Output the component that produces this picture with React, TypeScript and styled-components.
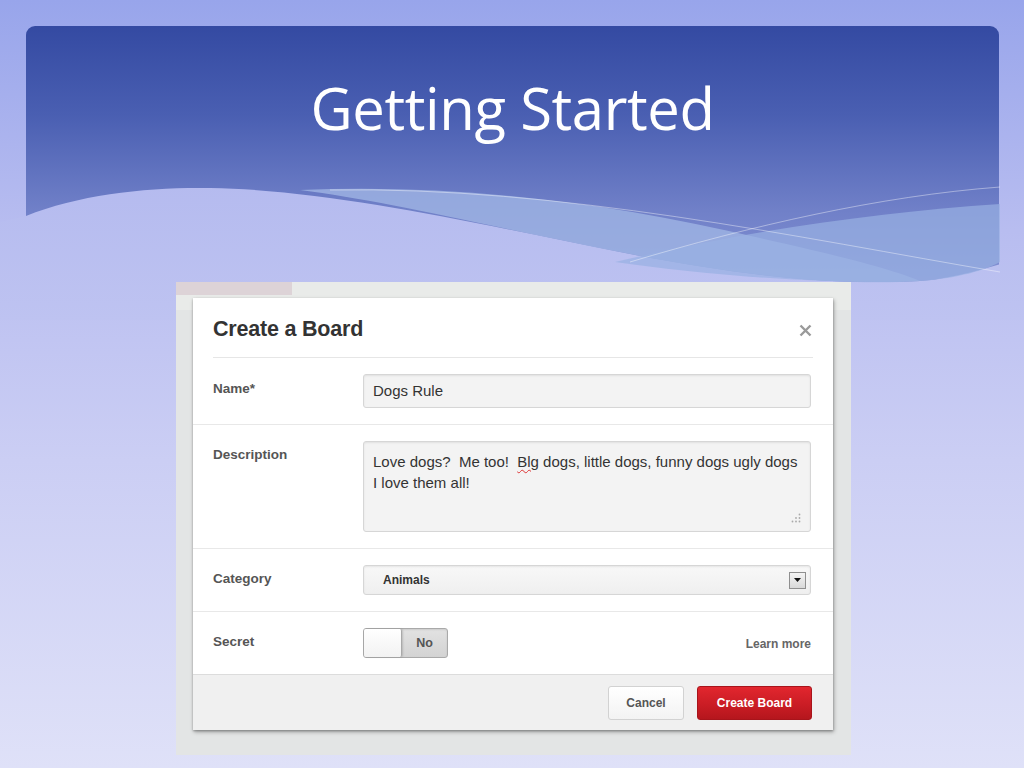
import React from "react";
import styled, { createGlobalStyle } from "styled-components";

const Global = createGlobalStyle`
  html, body { margin: 0; padding: 0; }
  body { width: 1024px; height: 768px; overflow: hidden; font-family: "Liberation Sans", Arial, sans-serif; }
`;

const Slide = styled.div`
  width: 1024px;
  height: 768px;
  box-sizing: border-box;
  padding-top: 26px;
  background: linear-gradient(180deg, #98a5eb 0%, #b8bdf0 30%, #cbcef4 60%, #dfe1f8 100%);
  display: flex;
  flex-direction: column;
`;

const Header = styled.div`
  position: relative;
  margin: 0 25px 0 26px;
  height: 256px;
  border-radius: 9px 9px 0 0;
  background: linear-gradient(180deg, #344aa2 0%, #4a5fb2 35%, #7080c8 72%, #8392d4 100%);
  display: flex;
  justify-content: center;
`;

const Title = styled.h1`
  margin: 42px 0 0 0;
  font-family: "Open Sans", "Noto Sans", sans-serif;
  font-weight: 400;
  font-size: 58px;
  line-height: 80px;
  letter-spacing: -0.4px;
  color: #ffffff;
  position: relative;
  z-index: 1;
`;

const WaveSvg = styled.svg`
  position: absolute;
  left: -26px;
  top: 144px;
  width: 1024px;
  height: 150px;
  overflow: visible;
`;

const Frame = styled.div`
  margin-left: 176px;
  width: 675px;
  height: 473px;
  box-sizing: border-box;
  padding: 16px 18px 25px 17px;
  background:
    linear-gradient(#ddd3d7, #ddd3d7) 0 0 / 116px 13px no-repeat,
    linear-gradient(#e9ebe9, #e9ebe9) 0 0 / 100% 28px no-repeat,
    #e3e5e5;
  position: relative;
  z-index: 2;
`;

const Dialog = styled.div`
  background: #ffffff;
  box-shadow: 0 1px 2px rgba(0, 0, 0, 0.25), 1px 2px 4px rgba(0, 0, 0, 0.3);
  display: flex;
  flex-direction: column;
  height: 432px;
`;

const DialogHead = styled.div`
  margin: 0 20px;
  height: 60px;
  box-sizing: border-box;
  padding-top: 4px;
  border-bottom: 1px solid #e6e6e6;
  display: flex;
  align-items: center;
  justify-content: space-between;
`;

const DialogTitle = styled.h2`
  margin: 0;
  font-family: "Liberation Sans", Arial, sans-serif;
  font-weight: 700;
  font-size: 21.5px;
  color: #333333;
  letter-spacing: -0.2px;
`;

const Close = styled.svg`
  width: 13px;
  height: 13px;
  margin-right: 1px;
  margin-top: 2px;
`;

const Row = styled.div<{ $last?: boolean }>`
  display: flex;
  align-items: flex-start;
  padding: 16px 22px 16px 20px;
  border-bottom: 1px solid ${(p) => (p.$last ? "#dcdcdc" : "#e8e8e8")};
`;

const Label = styled.div<{ $top: number }>`
  width: 150px;
  flex: none;
  font-weight: 700;
  font-size: 13.5px;
  color: #555555;
  padding-top: ${(p) => p.$top}px;
`;

const Field = styled.div`
  flex: 1;
  box-sizing: border-box;
  background: #f3f3f3;
  border: 1px solid #d6d6d6;
  border-radius: 3px;
  box-shadow: inset 0 1px 2px rgba(0, 0, 0, 0.08);
  color: #333333;
  font-size: 15px;
`;

const TextInput = styled(Field)`
  height: 34px;
  line-height: 32px;
  padding: 0 9px;
`;

const TextArea = styled(Field)`
  position: relative;
  height: 91px;
  padding: 9px 9px;
  line-height: 21px;
  white-space: pre-wrap;
`;

const Misspelt = styled.span`
  text-decoration: underline wavy #d33;
  text-decoration-thickness: 1px;
  text-underline-offset: 2px;
`;

const Grip = styled.svg`
  position: absolute;
  right: 9px;
  bottom: 8px;
  width: 10px;
  height: 10px;
`;

const Select = styled(Field)`
  height: 30px;
  display: flex;
  align-items: center;
  justify-content: space-between;
  padding: 0 4px 0 19px;
  background: linear-gradient(180deg, #f8f8f8, #efefef);
  font-size: 12px;
  font-weight: 700;
`;

const Arrow = styled.div`
  width: 17px;
  height: 17px;
  box-sizing: border-box;
  border: 1px solid #8f8f8f;
  background: linear-gradient(180deg, #f4f4f4, #d8d8d8);
  display: flex;
  align-items: center;
  justify-content: center;
`;

const SecretLine = styled.div`
  flex: 1;
  display: flex;
  align-items: center;
  justify-content: space-between;
`;

const Toggle = styled.div`
  width: 85px;
  height: 30px;
  box-sizing: border-box;
  border: 1px solid #a9a9a9;
  border-radius: 3px;
  background: linear-gradient(180deg, #e2e2e2, #d3d3d3);
  display: flex;
  align-items: stretch;
  box-shadow: inset 0 1px 2px rgba(0, 0, 0, 0.1);
`;

const Knob = styled.div`
  width: 38px;
  box-sizing: border-box;
  background: linear-gradient(180deg, #ffffff, #f2f2f2);
  border-right: 1px solid #a9a9a9;
  border-radius: 2px;
  box-shadow: 1px 0 2px rgba(0, 0, 0, 0.15);
`;

const ToggleText = styled.div`
  flex: 1;
  display: flex;
  align-items: center;
  justify-content: center;
  font-size: 12.5px;
  font-weight: 700;
  color: #555555;
`;

const LearnMore = styled.a`
  font-size: 12px;
  font-weight: 700;
  color: #666666;
  text-decoration: none;
  margin-top: 1px;
`;

const Footer = styled.div`
  flex: 1;
  background: #f0f0f0;
  display: flex;
  align-items: flex-start;
  justify-content: flex-end;
  gap: 13px;
  padding: 11px 21px 0 0;
`;

const Button = styled.button<{ $primary?: boolean }>`
  height: 34px;
  box-sizing: border-box;
  padding: 0 16px;
  border-radius: 3px;
  font-family: "Liberation Sans", Arial, sans-serif;
  font-size: 12px;
  font-weight: 700;
  cursor: pointer;
  border: 1px solid ${(p) => (p.$primary ? "#a8141b" : "#d2d2d2")};
  color: ${(p) => (p.$primary ? "#ffffff" : "#555555")};
  background: ${(p) =>
    p.$primary
      ? "linear-gradient(180deg, #e2262e 0%, #c81c24 60%, #b5161d 100%)"
      : "linear-gradient(180deg, #ffffff 0%, #f3f3f3 100%)"};
  min-width: ${(p) => (p.$primary ? "115px" : "76px")};
`;

function Waves() {
  return (
    <WaveSvg viewBox="0 170 1024 150" aria-hidden="true">
      <defs>
        <linearGradient id="lav" x1="0" y1="185" x2="0" y2="320" gradientUnits="userSpaceOnUse">
          <stop offset="0" stopColor="#b5bbef" />
          <stop offset="1" stopColor="#bec3f1" />
        </linearGradient>
      </defs>
      <path
        d="M0 222 L26 216 C80 194 150 187 210 188 C330 190 470 222 620 252 C740 276 840 286 920 281 C960 278 990 266 1024 258 L1024 320 L0 320 Z"
        fill="url(#lav)"
      />
      <path
        d="M300 190 C450 184 600 200 760 238 C850 258 900 272 920 281 C840 286 740 276 620 252 C470 222 380 200 300 190 Z"
        fill="#9fb4e4"
        opacity="0.8"
      />
      <path
        d="M615 262 C750 230 880 212 1000 204 L1000 262 C985 270 960 278 920 281 C820 285 700 274 615 262 Z"
        fill="#98b0e2"
        opacity="0.7"
      />
      <path d="M330 190 C560 186 800 238 1000 272" stroke="#ffffff" strokeOpacity="0.5" strokeWidth="0.8" fill="none" />
      <path d="M630 262 C750 226 880 196 1000 187" stroke="#ffffff" strokeOpacity="0.5" strokeWidth="0.8" fill="none" />
    </WaveSvg>
  );
}

export default function App() {
  return (
    <>
      <Global />
      <Slide>
        <Header>
          <Title>Getting Started</Title>
          <Waves />
        </Header>
        <Frame>
          <Dialog>
            <DialogHead>
              <DialogTitle>Create a Board</DialogTitle>
              <Close viewBox="0 0 13 13" aria-label="Close">
                <path d="M1.5 1.5 L11.5 11.5 M11.5 1.5 L1.5 11.5" stroke="#9a9a9a" strokeWidth="2.4" strokeLinecap="butt" />
              </Close>
            </DialogHead>
            <Row>
              <Label $top={7}>Name*</Label>
              <TextInput>Dogs Rule</TextInput>
            </Row>
            <Row>
              <Label $top={6}>Description</Label>
              <TextArea>
                {"Love dogs?  Me too!  "}
                <Misspelt>Blg</Misspelt>
                {" dogs, little dogs, funny dogs ugly dogs\nI love them all!"}
                <Grip viewBox="0 0 10 10">
                  <circle cx="8.5" cy="1.5" r="0.9" fill="#aaa" />
                  <circle cx="5" cy="5" r="0.9" fill="#aaa" />
                  <circle cx="8.5" cy="5" r="0.9" fill="#aaa" />
                  <circle cx="1.5" cy="8.5" r="0.9" fill="#aaa" />
                  <circle cx="5" cy="8.5" r="0.9" fill="#aaa" />
                  <circle cx="8.5" cy="8.5" r="0.9" fill="#aaa" />
                </Grip>
              </TextArea>
            </Row>
            <Row>
              <Label $top={6}>Category</Label>
              <Select>
                <span>Animals</span>
                <Arrow>
                  <svg width="7" height="4" viewBox="0 0 7 4">
                    <path d="M0 0 L7 0 L3.5 4 Z" fill="#111" />
                  </svg>
                </Arrow>
              </Select>
            </Row>
            <Row $last>
              <Label $top={6}>Secret</Label>
              <SecretLine>
                <Toggle>
                  <Knob />
                  <ToggleText>No</ToggleText>
                </Toggle>
                <LearnMore href="#">Learn more</LearnMore>
              </SecretLine>
            </Row>
            <Footer>
              <Button>Cancel</Button>
              <Button $primary>Create Board</Button>
            </Footer>
          </Dialog>
        </Frame>
      </Slide>
    </>
  );
}
